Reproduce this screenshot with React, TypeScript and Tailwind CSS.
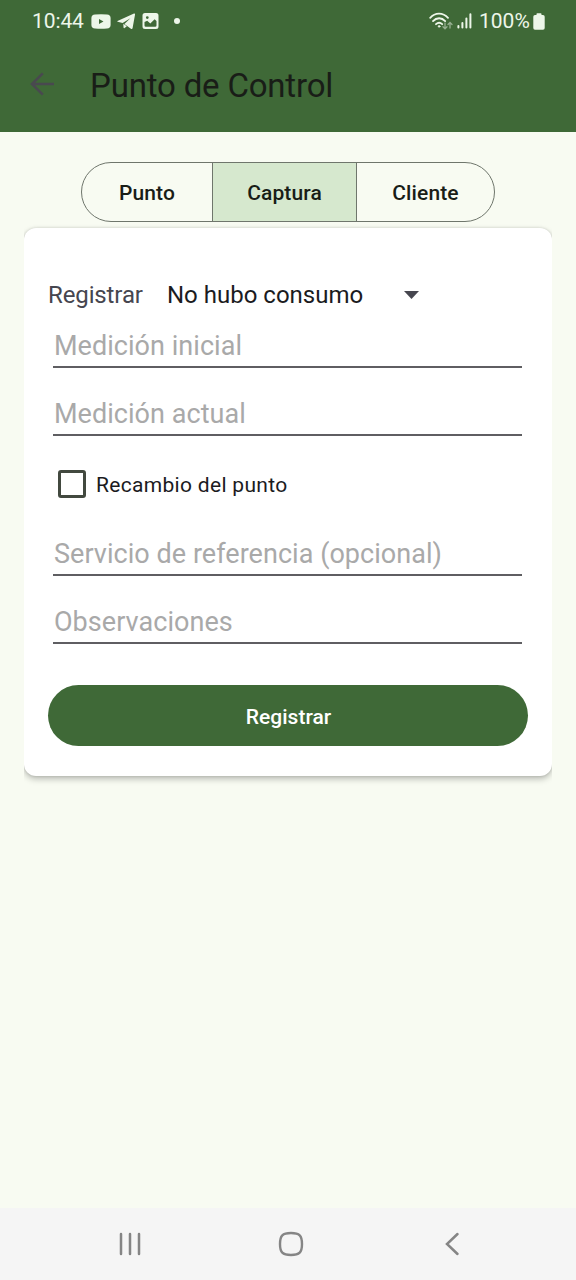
import React, { useState } from "react";

const tabs = [
  { label: "Punto", className: "w-[131px] border-r border-[#6f766c]" },
  { label: "Captura", className: "w-[144px] border-r border-[#6f766c]" },
  { label: "Cliente", className: "w-[137px]" },
];

function Field({ placeholder, className = "" }: { placeholder: string; className?: string }) {
  return (
    <input
      aria-label={placeholder}
      placeholder={placeholder}
      className={`ml-[5px] block h-11 w-[469px] shrink-0 border-b-2 border-[#5f5e62] bg-transparent p-0 pt-[2px] pl-px text-[27px] tracking-[.04px] outline-none placeholder:text-[#a9a9a9] ${className}`}
    />
  );
}

function StatusBar() {
  return (
    <div className="flex h-[42px] items-center justify-between pr-[30px] pl-8 text-[#edf6e9]">
      <div className="flex items-center">
        <span className="w-[52px] text-[21px] leading-6 tracking-[-.1px] whitespace-nowrap">10:44</span>
        <svg className="ml-[7px] h-[15px] w-5" viewBox="0 0 20 15">
          <path fill="currentColor" fillRule="evenodd" d="M4 .5Q10 0 16 .5Q19.5.8 19.6 4V11Q19.5 14.2 16 14.5Q10 15 4 14.5Q.5 14.2.4 11V4Q.5.8 4 .5ZM8 5V10L12.5 7.5Z" />
        </svg>
        <svg className="ml-[6px] h-[17px] w-[19px]" viewBox="0 0 19 17">
          <path fill="currentColor" d="M.5 8L17 .6Q18.2.2 18 1.7L15.6 15Q15.3 16.6 13.9 15.7L7.4 11.1L13.4 5.2L5.6 9.9L.7 8.7Q-.2 8.4.5 8Z" />
          <path fill="currentColor" d="M6.3 10.8L9.8 13.2L7.6 15Q6.7 15.6 6.5 14.2Z" />
        </svg>
        <svg className="ml-[6px] h-4 w-[17px]" viewBox="0 0 17 16">
          <path fill="currentColor" fillRule="evenodd" d="M3 0H14Q16.5 0 16.5 2.5V13.5Q16.5 16 14 16H3Q.5 16 .5 13.5V2.5Q.5 0 3 0ZM2.5 9V12.5Q2.5 13.8 3.8 13.8H13.2Q14.5 13.8 14.5 12.5V8L12.6 6.2L8.3 10.6L5.2 7.7ZM5.3 3.2A1.4 1.4 0 1 0 5.3 6A1.4 1.4 0 1 0 5.3 3.2Z" />
        </svg>
        <span className="ml-[15px] size-[6px] rounded-full bg-current" />
      </div>
      <div className="flex items-center">
        <svg className="h-[18px] w-6" viewBox="0 0 24 18" fill="none" stroke="currentColor" strokeLinecap="round">
          <path strokeWidth="1.8" d="M1.2 5.8C6 .2 14 .2 19 5.8M4 9.1C7.5 5.3 12.7 5.3 16.2 9.1M7 12.2C9 10.3 11.2 10.3 13.2 12.2" />
          <circle cx="10.1" cy="14.4" r=".8" fill="currentColor" />
          <path opacity=".5" strokeWidth="1.3" d="M16 11V16.5M14 14.7L16 16.8L18 14.7M21 16V10.5M19 12.5L21 10.4L23 12.5" />
        </svg>
        <svg className="ml-[4px] h-4 w-[15px]" viewBox="0 0 15 16" stroke="currentColor" strokeWidth="2" strokeLinecap="round">
          <path d="M1.4 13V14.5M5.4 10V14.5M9.4 5.5V14.5M13.4 1.2V14.5" />
        </svg>
        <span className="ml-[7px] w-[52px] text-[21px] leading-6 whitespace-nowrap">100%</span>
        <svg className="ml-[2px] mr-px h-[17px] w-3" viewBox="0 0 12 17">
          <path fill="currentColor" d="M3.5 2V1Q3.5.3 4.3.3H7.7Q8.5.3 8.5 1V2H10Q11.7 2 11.7 3.7V15Q11.7 16.7 10 16.7H2Q.3 16.7.3 15V3.7Q.3 2 2 2Z" />
        </svg>
      </div>
    </div>
  );
}

export default function App() {
  const [active, setActive] = useState("Captura");
  const [checked, setChecked] = useState(false);

  return (
    <div className="flex h-[1280px] w-[576px] flex-col overflow-hidden bg-[#f8fbf2] font-['Roboto',sans-serif] text-[#1b1b1e]">
      <header className="h-[132px] shrink-0 bg-[#3f6937]">
        <StatusBar />
        <div className="flex h-[84px] items-center pl-[30px]">
          <button aria-label="Volver" className="h-6 w-6">
            <svg className="h-6 w-6" viewBox="0 0 24 24" fill="none" stroke="#49494f" strokeWidth="2.6">
              <path d="M24 12H2.5M12.8 1.3L2 12L12.8 22.7" />
            </svg>
          </button>
          <h1 className="ml-[36px] pt-[3px] text-[33px] leading-10 tracking-[-.18px] whitespace-nowrap text-[#191d17]">Punto de Control</h1>
        </div>
      </header>

      <main className="flex flex-1 flex-col items-center">
        <div className="mt-[30px] flex h-[60px] w-[414px] shrink-0 overflow-hidden rounded-full border border-[#6f766c]">
          {tabs.map((tab) => (
            <button
              key={tab.label}
              onClick={() => setActive(tab.label)}
              className={`shrink-0 pt-[4px] text-[21px] font-medium tracking-[.12px] text-[#191d17] ${tab.className} ${active === tab.label ? "bg-[#d6e8ce]" : ""}`}
            >
              {tab.label}
            </button>
          ))}
        </div>

        <div className="w-[528px] overflow-x-clip overflow-y-visible pt-[6px]">
          <section className="flex h-[548px] flex-col rounded-xl bg-white px-6 shadow-[0_3px_6px_rgba(0,0,0,0.25),0_0_3px_rgba(0,0,0,0.14)]">
            <div className="mt-[51px] flex h-8 items-center text-2xl whitespace-nowrap">
              <span className="w-[119px] tracking-[-.12px] text-[#46464f]">Registrar</span>
              <button className="flex items-center">
                <span className="w-[237px] text-left">No hubo consumo</span>
                <svg className="h-2 w-[15px]" viewBox="0 0 15 8">
                  <path fill="#46464f" d="M0 0H15L7.5 8Z" />
                </svg>
              </button>
            </div>
            <Field placeholder="Medición inicial" className="mt-[13px]" />
            <Field placeholder="Medición actual" className="mt-6" />
            <label className="mt-[34px] ml-[10px] flex h-7 items-center text-[21px] whitespace-nowrap">
              <input type="checkbox" checked={checked} onChange={() => setChecked(!checked)} className="peer sr-only" />
              <span className="size-7 rounded-[3px] border-[3px] border-[#42493f] peer-checked:bg-[#3f6937]" />
              <span className="ml-[10px] pt-[3px] tracking-[.31px]">Recambio del punto</span>
            </label>
            <Field placeholder="Servicio de referencia (opcional)" className="mt-[34px]" />
            <Field placeholder="Observaciones" className="mt-6" />
            <button className="mt-[41px] h-[61px] shrink-0 rounded-full bg-[#3f6937] pt-[4px] pl-px text-[21px] font-medium tracking-[.04px] text-white">
              Registrar
            </button>
          </section>
        </div>
      </main>

      <nav className="h-[72px] shrink-0 bg-[#f5f5f5] text-[#858585]">
        <div className="flex h-full items-center pl-[118px]">
          <button aria-label="Recientes">
            <svg className="h-6 w-6" viewBox="0 0 24 24" stroke="currentColor" strokeWidth="2.5" strokeLinecap="round">
              <path d="M3 2V22M12 2V22M21 2V22" />
            </svg>
          </button>
          <button aria-label="Inicio" className="ml-[136px]">
            <svg className="h-[26px] w-[26px]" viewBox="0 0 26 26" fill="none" stroke="currentColor" strokeWidth="2.4">
              <path d="M13 2C21.5 2 24 4.5 24 13C24 21.5 21.5 24 13 24C4.500 24 2 21.500 2 13C2 4.500 4.500 2 13 2Z" />
            </svg>
          </button>
          <button aria-label="Atrás" className="ml-[140px]">
            <svg className="h-6 w-[16px]" viewBox="0 0 16 24" fill="none" stroke="currentColor" strokeWidth="2.5" strokeLinecap="round">
              <path d="M13.5 2L3 12L13.5 22" />
            </svg>
          </button>
        </div>
      </nav>
    </div>
  );
}
